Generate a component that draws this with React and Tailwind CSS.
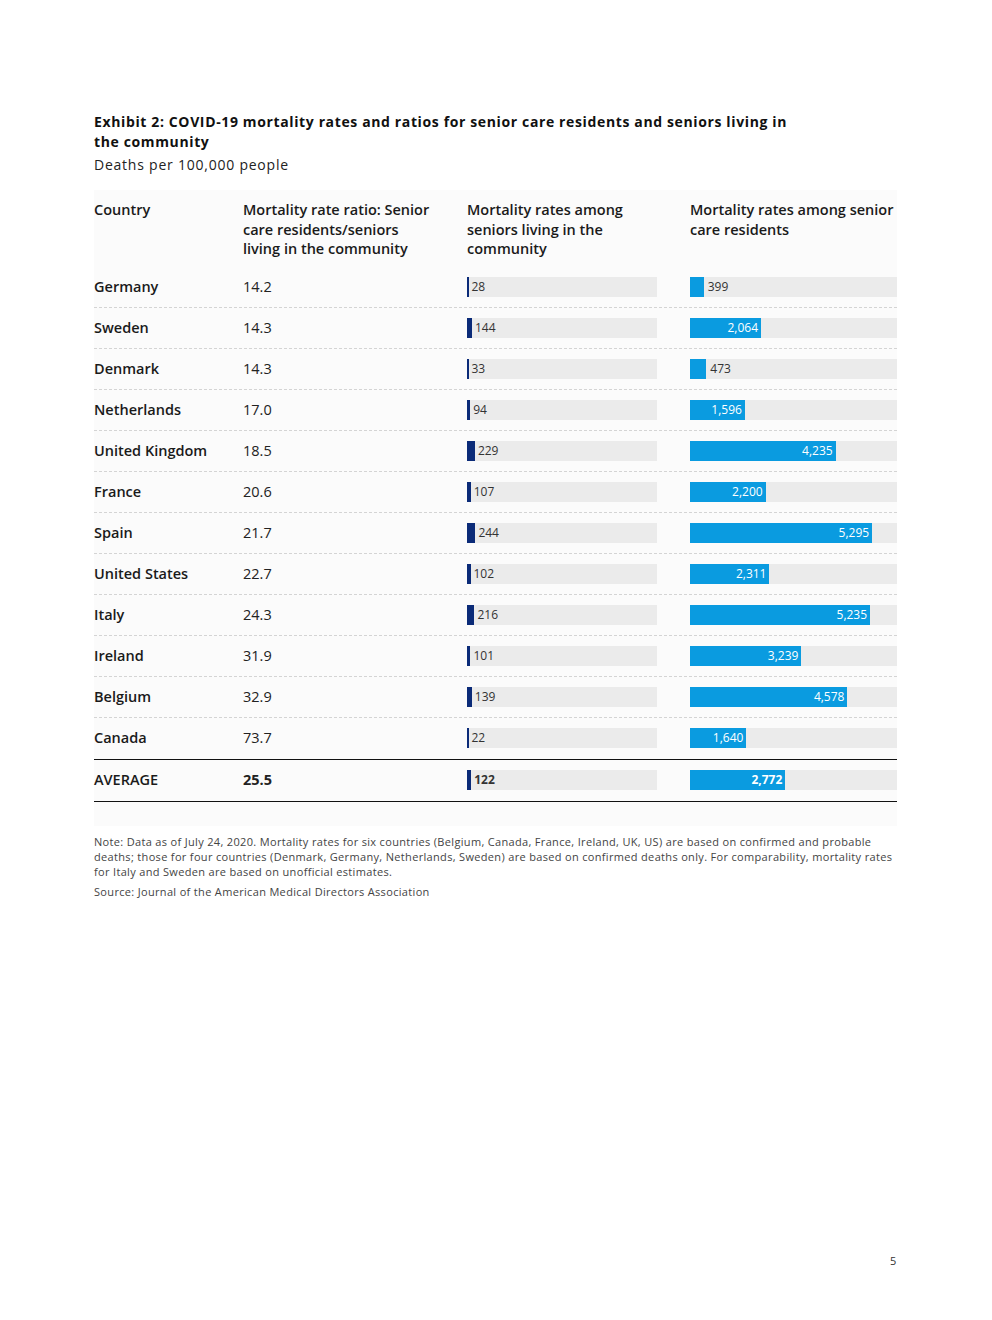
const rows = [
  { country: "Germany", ratio: "14.2", community: 28, residents: 399 },
  { country: "Sweden", ratio: "14.3", community: 144, residents: 2064 },
  { country: "Denmark", ratio: "14.3", community: 33, residents: 473 },
  { country: "Netherlands", ratio: "17.0", community: 94, residents: 1596 },
  { country: "United Kingdom", ratio: "18.5", community: 229, residents: 4235 },
  { country: "France", ratio: "20.6", community: 107, residents: 2200 },
  { country: "Spain", ratio: "21.7", community: 244, residents: 5295 },
  { country: "United States", ratio: "22.7", community: 102, residents: 2311 },
  { country: "Italy", ratio: "24.3", community: 216, residents: 5235 },
  { country: "Ireland", ratio: "31.9", community: 101, residents: 3239 },
  { country: "Belgium", ratio: "32.9", community: 139, residents: 4578 },
  { country: "Canada", ratio: "73.7", community: 22, residents: 1640 },
];

const average = { country: "AVERAGE", ratio: "25.5", community: 122, residents: 2772 };

// px per death / 100k
const SCALE = 0.0344;

function fmt(n) {
  return n.toLocaleString("en-US");
}

function CommunityBar({ value, bold }) {
  const w = Math.max(1.5, value * SCALE);
  return (
    <div className="flex h-5 w-[190px] items-center bg-[#ebebeb]">
      <div className="h-full bg-[#0b2b78]" style={{ width: w }} />
      <span className={`pl-[3px] text-[12px] text-[#333] ${bold ? "font-bold" : ""}`}>
        {fmt(value)}
      </span>
    </div>
  );
}

function ResidentsBar({ value, bold }) {
  const w = value * SCALE;
  const inside = w > 40;
  return (
    <div className="flex h-5 w-full items-center bg-[#ebebeb]">
      <div
        className="flex h-full items-center justify-end bg-[#0a9be0] pr-[3px]"
        style={{ width: w }}
      >
        {inside && (
          <span className={`text-[12px] text-white ${bold ? "font-bold" : ""}`}>{fmt(value)}</span>
        )}
      </div>
      {!inside && <span className="pl-[4px] text-[12px] text-[#333]">{fmt(value)}</span>}
    </div>
  );
}

function Row({ r, avg, last }) {
  return (
    <div
      className={`grid h-[41px] grid-cols-[149px_224px_223px_207px] items-center ${
        avg || last ? "" : "border-b border-dashed border-[#d4d4d4]"
      }`}
    >
      <div className="text-[14.5px] font-semibold text-[#1a1a1a]">{r.country}</div>
      <div className={`text-[14.5px] text-[#222] ${avg ? "font-bold" : ""}`}>{r.ratio}</div>
      <div>
        <CommunityBar value={r.community} bold={avg} />
      </div>
      <div>
        <ResidentsBar value={r.residents} bold={avg} />
      </div>
    </div>
  );
}

export default function App() {
  return (
    <div
      className="min-h-[1320px] w-[992px] bg-white text-[#222]"
      style={{ fontFamily: '"Open Sans", "Noto Sans", sans-serif' }}
    >
      <div className="ml-[94px] w-[803px] pt-[112px]">
        <h1 className="w-[712px] text-[14px] font-bold leading-[20px] tracking-[0.045em] text-[#111]">
          Exhibit 2: COVID-19 mortality rates and ratios for senior care residents and seniors living in
          the community
        </h1>
        <p className="mt-[2px] text-[14px] leading-[22px] tracking-[0.055em] text-[#222]">
          Deaths per 100,000 people
        </p>

        <div className="mt-[14px] bg-[#fbfbfb] pt-[10px] pb-[24px]">
          <div className="grid grid-cols-[149px_224px_223px_207px] pb-[8px] text-[14.5px] font-semibold leading-[19.5px] text-[#1a1a1a]">
            <div>Country</div>
            <div className="pr-[30px]">Mortality rate ratio: Senior care residents/seniors living in the community</div>
            <div className="pr-8">Mortality rates among seniors living in the community</div>
            <div>Mortality rates among senior care residents</div>
          </div>

          {rows.map((r, i) => (
            <Row key={r.country} r={r} last={i === rows.length - 1} />
          ))}
          <div className="border-y border-[#111]">
            <Row r={average} avg />
          </div>
        </div>

        <div className="mt-[8px] text-[11px] leading-[15px] tracking-[0.03em] text-[#444]">
          <p>
            Note: Data as of July 24, 2020. Mortality rates for six countries (Belgium, Canada, France, Ireland, UK, US) are based on confirmed and probable deaths; those for four countries (Denmark, Germany, Netherlands, Sweden) are based on confirmed deaths only. For comparability, mortality rates for Italy and Sweden are based on unofficial estimates.
          </p>
          <p className="mt-[5px]">Source: Journal of the American Medical Directors Association</p>
        </div>
      </div>

      <div className="mt-[354px] ml-[890px] text-[11px] text-[#333]">5</div>
    </div>
  );
}
